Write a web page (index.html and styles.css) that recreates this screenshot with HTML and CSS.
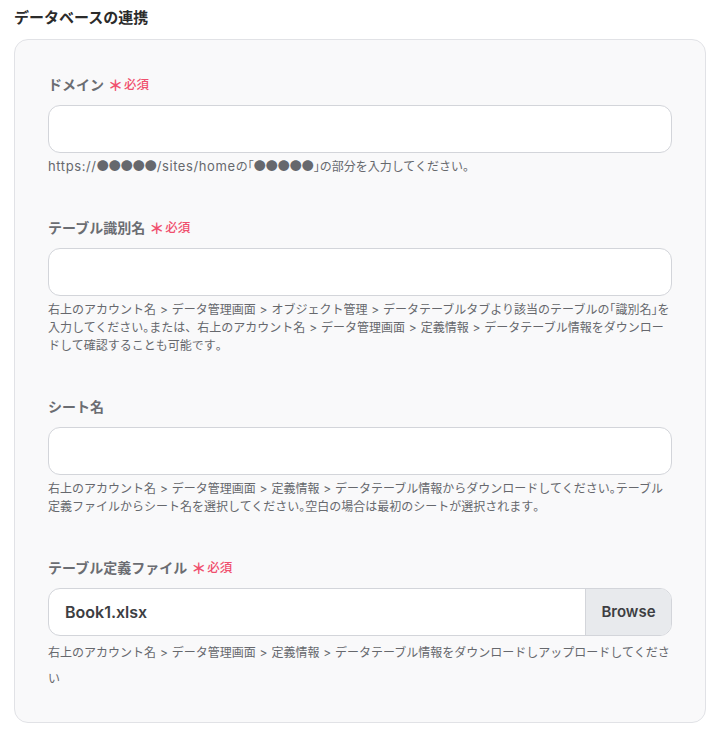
FILE: index.html
```html
<!DOCTYPE html>
<html lang="ja">
<head>
<meta charset="utf-8">
<link rel="stylesheet" href="styles.css">
</head>
<body>
<div class="page">
  <h2 class="title">データベースの連携</h2>
  <div class="card">
    <div class="field">
      <label class="label">ドメイン<span class="req"><span class="ast">＊</span>必須</span></label>
      <div class="input"></div>
      <p class="help"><span class="lat">https://</span><span class="dots">●●●●●</span><span class="lat">/sites/home</span>の<span class="p">「</span><span class="dots">●●●●●</span><span class="p">」</span>の部分を入力してください<span class="p">。</span></p>
    </div>
    <div class="field">
      <label class="label">テーブル識別名<span class="req"><span class="ast">＊</span>必須</span></label>
      <div class="input"></div>
      <p class="help">右上のアカウント名 &gt; データ管理画面 &gt; オブジェクト管理 &gt; データテーブルタブより該当のテーブルの<span class="p">「</span>識別名<span class="p">」</span>を入力してください<span class="p">。</span>または、右上のアカウント名 &gt; データ管理画面 &gt; 定義情報 &gt; データテーブル情報をダウンロードして確認することも可能です<span class="p">。</span></p>
    </div>
    <div class="field">
      <label class="label">シート名</label>
      <div class="input"></div>
      <p class="help">右上のアカウント名 &gt; データ管理画面 &gt; 定義情報 &gt; データテーブル情報からダウンロードしてください<span class="p">。</span>テーブル定義ファイルからシート名を選択してください<span class="p">。</span>空白の場合は最初のシートが選択されます<span class="p">。</span></p>
    </div>
    <div class="field last">
      <label class="label">テーブル定義ファイル<span class="req"><span class="ast">＊</span>必須</span></label>
      <div class="input file">
        <span class="filename">Book1.xlsx</span>
        <span class="browse">Browse</span>
      </div>
      <p class="help tall">右上のアカウント名 &gt; データ管理画面 &gt; 定義情報 &gt; データテーブル情報をダウンロードしアップロードしてください</p>
    </div>
  </div>
</div>
</body>
</html>
```

FILE: styles.css
```css
* { box-sizing: border-box; }
html, body { margin: 0; padding: 0; background: #ffffff; }
body {
  font-family: "Inter", "Noto Sans CJK JP", sans-serif;
  color: #333;
}
.page {
  padding: 7px 14px 0 14px;
  width: 720px;
}
.title {
  margin: 0;
  font-size: 15px;
  font-weight: 700;
  line-height: 22px;
  color: #2b2b2b;
}
.card {
  margin-top: 10px;
  width: 692px;
  background: #f9f9fa;
  border: 1px solid #e1e2e6;
  border-radius: 14px;
  padding: 35px 33px 30px 33px;
}
.field { margin-bottom: 42px; }
.field.last { margin-bottom: 0; }
.label {
  display: flex;
  align-items: center;
  height: 20px;
  font-size: 14px;
  font-weight: 700;
  line-height: 20px;
  color: #6b6d72;
}
.req {
  display: inline-flex;
  align-items: center;
  margin-left: 4px;
  font-size: 12.5px;
  font-weight: 500;
  line-height: 1;
  color: #f0506e;
}
.ast {
  font-size: 15px;
  font-weight: 700;
  line-height: 1;
  margin-right: 1px;
}
.input {
  margin-top: 10px;
  height: 48px;
  background: #fff;
  border: 1px solid #d3d5da;
  border-radius: 12px;
}
.input.file {
  display: flex;
  align-items: stretch;
  overflow: hidden;
}
.filename {
  flex: 1;
  display: flex;
  align-items: center;
  padding-left: 16px;
  padding-bottom: 1px;
  font-size: 16px;
  font-weight: 600;
  color: #3d3e42;
}
.browse {
  width: 86px;
  display: flex;
  align-items: center;
  justify-content: center;
  padding-bottom: 2px;
  background: #e8eaed;
  border-left: 1px solid #d3d5da;
  font-size: 15px;
  font-weight: 600;
  color: #3d3e42;
}
.help {
  margin: 5px 0 0 0;
  font-size: 12px;
  line-height: 18px;
  color: #66686d;
  word-spacing: 0.5px;
}
.help .p {
  font-family: "Noto Sans CJK JP", sans-serif;
  font-feature-settings: "halt";
  line-height: 1;
}
.help .lat {
  font-size: 13px;
  letter-spacing: 0.6px;
  line-height: 1;
}
.dots {
  font-family: "Noto Sans CJK JP", sans-serif;
  line-height: 1;
}
.help.tall {
  margin-top: 4px;
  line-height: 26px;
}
```
